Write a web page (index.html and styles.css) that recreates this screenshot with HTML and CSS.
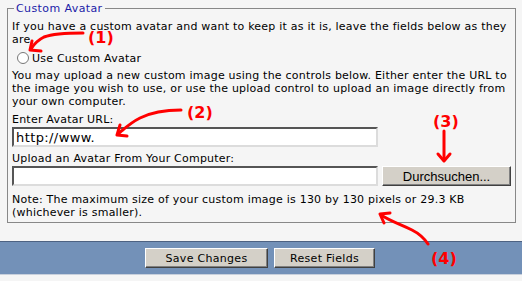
FILE: index.html
```html
<!DOCTYPE html>
<html lang="en">
<head>
    <meta charset="UTF-8">
    <title>Custom Avatar</title>
    <link rel="stylesheet" href="styles.css">
</head>
<body>
    <div class="page">
        <fieldset class="avatar-box">
            <legend>Custom Avatar</legend>
            <p class="intro">If you have a custom avatar and want to keep it as it is, leave the fields below as they are</p>
            <label class="radio-row"><input type="radio" name="avatar"> Use Custom Avatar</label>
            <p class="help">You may upload a new custom image using the controls below. Either enter the URL to the image you wish to use, or use the upload control to upload an image directly from your own computer.</p>
            <div class="field-label">Enter Avatar URL:</div>
            <div class="field-row"><input class="text-input" type="text" value="http://www."></div>
            <div class="field-label">Upload an Avatar From Your Computer:</div>
            <div class="field-row">
                <input class="text-input" type="text">
                <button class="browse">Durchsuchen...</button>
            </div>
            <p class="note">Note: The maximum size of your custom image is 130 by 130 pixels or 29.3 KB (whichever is smaller).</p>
        </fieldset>
    </div>
    <div class="action-bar">
        <button class="action">Save Changes</button>
        <button class="action reset">Reset Fields</button>
    </div>
    <div class="bottom-line"></div>

    <svg class="marks" width="522" height="281" viewBox="0 0 522 281">
        <g fill="none" stroke="#ff0000" stroke-width="3" stroke-linecap="round" stroke-linejoin="round">
            <path d="M83 33 C70 33 52 34 44 37 C38 40 34 44 31 49"/>
            <path d="M30 50 L32 41 M30 50 L41 51"/>
            <path d="M181 110 C165 110 150 113 140 118 C130 123 124 129 118 134"/>
            <path d="M117 135 L120 125 M117 135 L127 136"/>
            <path d="M444 131 L444 160"/>
            <path d="M438 154 L444 161 L450 154"/>
            <path d="M428 244 C424 238 420 234 412 230 C400 224 392 222 381 215"/>
            <path d="M380 214 L384 223 M380 214 L390 213"/>
        </g>
        <g class="mark-text">
            <text x="88" y="43">(1)</text>
            <text x="187" y="118">(2)</text>
            <text x="433" y="127">(3)</text>
            <text x="431" y="264">(4)</text>
        </g>
    </svg>
</body>
</html>
```

FILE: styles.css
```css
body {
    margin: 0;
    background: #f5f5f5;
    font-family: "DejaVu Sans", Verdana, sans-serif;
    font-size: 11px;
    line-height: 13px;
    letter-spacing: 0.22px;
    color: #000;
    position: relative;
    width: 522px;
    height: 281px;
    overflow: hidden;
}
.page {
    padding: 2px 7px 0 7px;
}
.avatar-box {
    margin: 0;
    width: 509px;
    box-sizing: border-box;
    border: 1px solid #888;
    padding: 0 4px 3px 4px;
}
.avatar-box legend {
    color: #1c1ca8;
    padding: 0 2px;
    margin-left: 2px;
    letter-spacing: 0.4px;
}
p {
    margin: 0;
}
.intro {
    margin-top: 5px;
}
.radio-row {
    display: flex;
    align-items: center;
    margin: 5px 0 0 0;
    height: 14px;
}
.radio-row input {
    margin: 0 3px 0 5px;
    width: 12px;
    height: 12px;
}
.help {
    margin-top: 4px;
}
.field-label {
    margin-top: 5px;
}
.field-row {
    display: flex;
    gap: 4px;
    margin-top: 1px;
}
.text-input {
    width: 366px;
    height: 20px;
    box-sizing: border-box;
    margin: 0;
    padding: 1px 2px;
    border: 2px solid;
    border-color: #555 #dcdcdc #dcdcdc #555;
    background: #fff;
    font-family: "DejaVu Sans", Verdana, sans-serif;
    font-size: 13px;
    letter-spacing: 0.4px;
}
.browse {
    width: 129px;
    height: 20px;
    margin: 0;
    padding: 0;
    border: 1px solid;
    border-color: #fff #404040 #404040 #fff;
    box-shadow: inset -1px -1px 0 #808080;
    background: #d4d0c8;
    font-family: "Liberation Sans", Arial, sans-serif;
    font-size: 13px;
    letter-spacing: 0;
}
.note {
    margin-top: 7px;
}
.action-bar {
    margin-top: 18px;
    height: 32px;
    background: #7391b8;
    border-top: 1px solid #4d6282;
    display: flex;
    justify-content: center;
    align-items: center;
    gap: 6px;
    padding-right: 2px;
}
.action {
    height: 20px;
    padding: 0;
    border: 1px solid;
    border-color: #fff #404040 #404040 #fff;
    box-shadow: inset -1px -1px 0 #808080;
    background: #d4d0c8;
    font-family: "DejaVu Sans", Verdana, sans-serif;
    font-size: 11px;
    letter-spacing: 0.3px;
    width: 123px;
}
.reset {
    width: 101px;
}
.bottom-line {
    height: 1px;
    background: #c8d0dc;
}
.marks {
    position: absolute;
    left: 0;
    top: 0;
    pointer-events: none;
}
.mark-text {
    fill: #ff0000;
    font-family: "DejaVu Sans", Verdana, sans-serif;
    font-weight: bold;
    font-size: 16px;
    letter-spacing: 0;
}
```
